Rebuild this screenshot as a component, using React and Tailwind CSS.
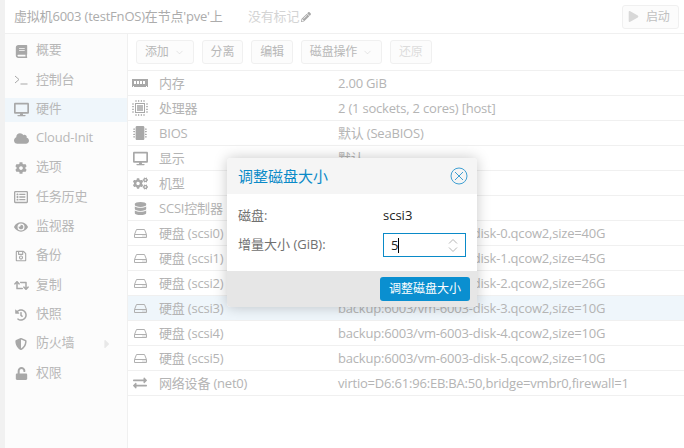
import { FaBook, FaDesktop, FaCloud, FaCog, FaCogs, FaRegListAlt, FaEye, FaRegSave, FaRetweet, FaHistory, FaShieldAlt, FaUnlock, FaMicrochip, FaDatabase, FaExchangeAlt, FaPlay, FaPencilAlt, FaCaretRight } from 'react-icons/fa'
import { ChevronDown } from 'lucide-react'

const font = { fontFamily: '"Open Sans", "Noto Sans CJK SC", sans-serif' }

function MemoryIcon() {
  return (
    <svg width="16" height="9" viewBox="0 0 16 9" className="text-[#a8a8a8]">
      <path d="M0 0h16v8h-1v-1h-1v1h-12v-1h-1v1h-1z" fill="currentColor" />
      <path d="M2 2h2v3h-2zM5 2h2v3h-2zM8 2h2v3h-2zM11 2h2v3h-2z" fill="#fff" />
    </svg>
  )
}

function CpuIcon() {
  return (
    <svg width="16" height="16" viewBox="0 0 16 16" className="text-[#a8a8a8]">
      <path d="M3 3h10v10h-10zM4 4v8h8v-8z" fill="currentColor" fillRule="evenodd" />
      <path d="M5 5h6v6h-6z" fill="#bcbcbc" />
      <path d="M4 0v2M6.700 0v2M9.300 0v2M12 0v2M4 14v2M6.700 14v2M9.300 14v2M12 14v2M0 4h2M0 6.700h2M0 9.300h2M0 12h2M14 4h2M14 6.700h2M14 9.300h2M14 12h2" stroke="currentColor" strokeWidth="1" />
    </svg>
  )
}

function TerminalIcon() {
  return (
    <svg width="14" height="10" viewBox="0 0 14 10" fill="none" stroke="#a8a8a8" strokeWidth="1">
      <path d="M1 1l4 3.500-4 3.500M6.500 9h7" />
    </svg>
  )
}

function HddIcon() {
  return (
    <svg width="13" height="11" viewBox="0 0 13 11" fill="none" stroke="#b0b0b0" strokeWidth="1">
      <path d="M2.500 1.500h8l2 5v3h-12v-3zM.5 6.500h12" />
      <path d="M8.500 8h1M10.500 8h1" />
    </svg>
  )
}

const navItems = [
  { label: '概要', icon: <FaBook size={13} /> },
  { label: '控制台', icon: <TerminalIcon /> },
  { label: '硬件', icon: <FaDesktop size={15} />, active: true },
  { label: 'Cloud-Init', icon: <FaCloud size={15} /> },
  { label: '选项', icon: <FaCog size={12} /> },
  { label: '任务历史', icon: <FaRegListAlt size={14} /> },
  { label: '监视器', icon: <FaEye size={14} /> },
  { label: '备份', icon: <FaRegSave size={12} /> },
  { label: '复制', icon: <FaRetweet size={15} /> },
  { label: '快照', icon: <FaHistory size={12} /> },
  { label: '防火墙', icon: <FaShieldAlt size={12} />, arrow: true },
  { label: '权限', icon: <FaUnlock size={13} /> },
]

const hdd = <HddIcon />

const rows = [
  { label: '内存', value: '2.00 GiB', icon: <MemoryIcon /> },
  { label: '处理器', value: '2 (1 sockets, 2 cores) [host]', icon: <CpuIcon /> },
  { label: 'BIOS', value: '默认 (SeaBIOS)', icon: <FaMicrochip size={14} /> },
  { label: '显示', value: '默认', icon: <FaDesktop size={15} /> },
  { label: '机型', value: '', icon: <FaCogs size={15} /> },
  { label: 'SCSI控制器', value: '', icon: <FaDatabase size={13} /> },
  { label: '硬盘 (scsi0)', value: 'backup:6003/vm-6003-disk-0.qcow2,size=40G', icon: hdd },
  { label: '硬盘 (scsi1)', value: 'backup:6003/vm-6003-disk-1.qcow2,size=45G', icon: hdd },
  { label: '硬盘 (scsi2)', value: 'backup:6003/vm-6003-disk-2.qcow2,size=26G', icon: hdd },
  { label: '硬盘 (scsi3)', value: 'backup:6003/vm-6003-disk-3.qcow2,size=10G', icon: hdd, selected: true },
  { label: '硬盘 (scsi4)', value: 'backup:6003/vm-6003-disk-4.qcow2,size=10G', icon: hdd },
  { label: '硬盘 (scsi5)', value: 'backup:6003/vm-6003-disk-5.qcow2,size=10G', icon: hdd },
  { label: '网络设备 (net0)', value: 'virtio=D6:61:96:EB:BA:50,bridge=vmbr0,firewall=1', icon: <FaExchangeAlt size={14} /> },
]

function ToolButton({ label, menu, disabled }) {
  return (
    <div className={`h-6 px-2 flex items-center gap-[5px] rounded-[3px] border border-[#f0f0f0] bg-[#fcfcfc] text-[12px] ${disabled ? 'text-[#dcdcdc]' : 'text-[#b8b8b8]'}`}>
      {label}
      {menu && <ChevronDown size={11} strokeWidth={1} className="text-[#c8c8c8]" />}
    </div>
  )
}

function ResizeDialog() {
  return (
    <div className="absolute left-[227px] top-[158px] w-[250px] h-[149px] rounded-[4px] overflow-hidden flex flex-col bg-white shadow-[0_0_14px_rgba(0,0,0,0.22)]">
      <div className="h-9 shrink-0 bg-[#f5f5f5] pl-[11px] pr-[9px] flex items-center justify-between">
        <span className="text-[15px] text-[#0a8ac8]">调整磁盘大小</span>
        <svg width="18" height="18" viewBox="0 0 18 18" fill="none" stroke="#3f9fd2" strokeWidth="1">
          <circle cx="9" cy="9" r="8" />
          <path d="M5 5l8 8M13 5l-8 8" />
        </svg>
      </div>
      <div className="flex-1 px-[11px] pt-[10px] text-[13px]">
        <div className="h-6 flex items-center">
          <span className="w-[145px] text-[#707070]">磁盘:</span>
          <span className="text-[#222]">scsi3</span>
        </div>
        <div className="h-6 mt-[5px] flex items-center">
          <span className="w-[145px] text-[#707070]">增量大小 (GiB):</span>
          <div className="w-[83px] h-6 border border-[#0a8ac8] pl-[7px] pr-[7px] flex items-center justify-between text-[#222]">
            <span className="border-r border-black leading-[15px]">5</span>
            <svg width="10" height="15" viewBox="0 0 10 15" fill="none" stroke="#b4b4b4" strokeWidth="1">
              <path d="M1 5.500l4-4 4 4M1 9.500l4 4 4-4" />
            </svg>
          </div>
        </div>
      </div>
      <div className="h-9 shrink-0 bg-[#e6e6e6] pr-[7px] flex items-center justify-end">
        <div className="w-[90px] h-[24px] rounded-[3px] bg-[#0a8fd0] text-white text-[12px] flex items-center justify-center">调整磁盘大小</div>
      </div>
    </div>
  )
}

export default function App() {
  return (
    <div className="relative w-[684px] h-[448px] overflow-hidden flex bg-white" style={font}>
      <div className="w-[5px] shrink-0 bg-[#f1f1f1]" />
      <div className="flex-1 flex flex-col min-w-0 tracking-[-0.2px]">
        <div className="h-[34px] shrink-0 border-b border-[#f0f0f0] flex items-center pl-[9px] pr-[5px]">
          <span className="text-[13px] text-[#acacac] w-[234px] whitespace-nowrap">虚拟机6003 (testFnOS)在节点'pve'上</span>
          <span className="text-[13px] text-[#d4d4d4]">没有标记</span>
          <FaPencilAlt size={10} className="text-[#a8a8a8] ml-[2px]" />
          <div className="ml-auto h-6 w-[57px] rounded-[3px] border border-[#f0f0f0] bg-[#fcfcfc] flex items-center gap-[7px] pl-[5px] text-[12px] text-[#c0c0c0]">
            <FaPlay size={11} className="text-[#d8d8d8]" />
            启动
          </div>
        </div>
        <div className="flex-1 flex min-h-0">
          <div className="w-[123px] shrink-0 bg-[#fcfcfc] border-r border-[#f0f0f0] pt-[5px] flex flex-col gap-[5.300px]">
            {navItems.map(item => (
              <div key={item.label} className={`h-6 flex items-center text-[13px] text-[#b8b8b8] ${item.active ? 'bg-[#eff6fb]' : ''}`}>
                <span className="w-[31px] pl-[8px] pr-[7px] flex justify-center text-[#a8a8a8]">{item.icon}</span>
                <span className="pb-[2px]">{item.label}</span>
                {item.arrow && <FaCaretRight size={14} className="ml-[26px] text-[#e8e8e8]" />}
              </div>
            ))}
          </div>
          <div className="flex-1 flex flex-col min-w-0">
            <div className="h-[37px] shrink-0 border-b border-[#f0f0f0] flex items-center gap-2 pl-2">
              <ToolButton label="添加" menu />
              <ToolButton label="分离" />
              <ToolButton label="编辑" />
              <ToolButton label="磁盘操作" menu />
              <ToolButton label="还原" disabled />
            </div>
            {rows.map(row => (
              <div key={row.label} className={`h-[25px] shrink-0 flex items-center border-b border-[#f0f0f0] text-[13px] text-[#b4b4b4] ${row.selected ? 'bg-[#eff6fb]' : ''}`}>
                <span className="w-6 shrink-0 flex justify-center text-[#a8a8a8]">{row.icon}</span>
                <span className="ml-[7px] w-[179px] shrink-0 pt-px">{row.label}</span>
                <span className="whitespace-nowrap pt-px">{row.value}</span>
              </div>
            ))}
          </div>
        </div>
      </div>
      <ResizeDialog />
    </div>
  )
}
